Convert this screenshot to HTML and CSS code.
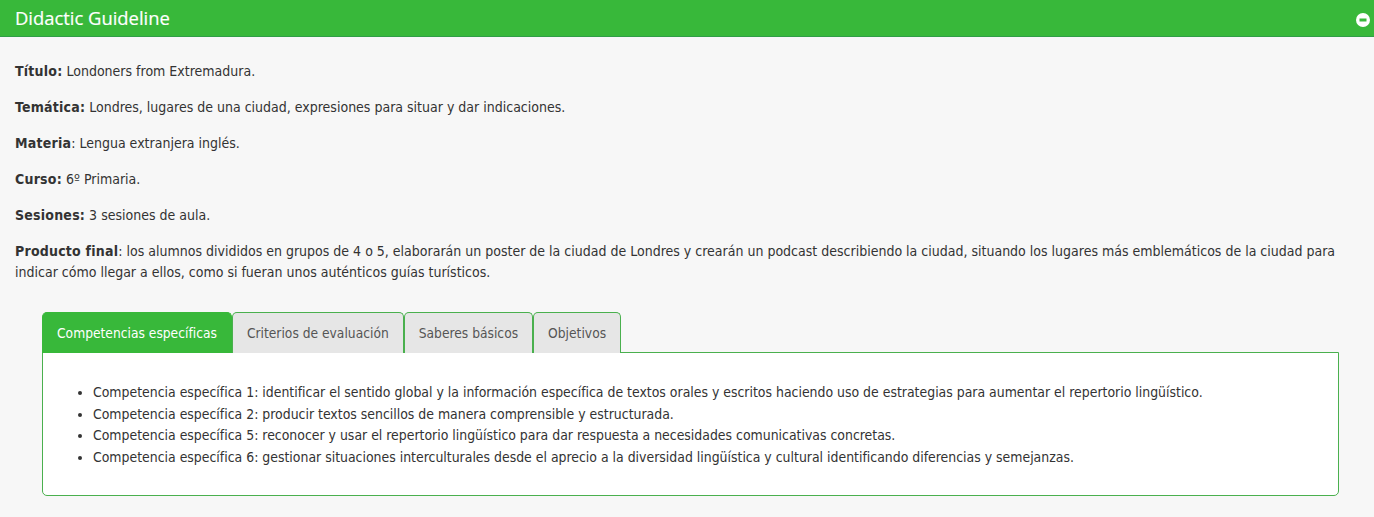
FILE: index.html
```html
<!DOCTYPE html>
<html lang="es">
<head>
<meta charset="utf-8">
<title>Didactic Guideline</title>
<link rel="stylesheet" href="styles.css">
</head>
<body>
<header class="bar">
  <h1 class="bar-title">Didactic Guideline</h1>
  <svg class="bar-icon" width="14" height="14" viewBox="0 0 14 14" aria-hidden="true"><circle cx="7" cy="7" r="7" fill="#fff"/><rect x="3.5" y="5.5" width="7" height="3" fill="#38b83a"/></svg>
</header>
<main class="content">
  <p class="line"><b>Título:</b> Londoners from Extremadura.</p>
  <p class="line"><b>Temática:</b> Londres, lugares de una ciudad, expresiones para situar y dar indicaciones.</p>
  <p class="line"><b>Materia</b>: Lengua extranjera inglés.</p>
  <p class="line"><b>Curso:</b> 6º Primaria.</p>
  <p class="line"><b>Sesiones:</b> 3 sesiones de aula.</p>
  <p class="line"><b>Producto final</b>: los alumnos divididos en grupos de 4 o 5, elaborarán un poster de la ciudad de Londres y crearán un podcast describiendo la ciudad, situando los lugares más emblemáticos de la ciudad para indicar cómo llegar a ellos, como si fueran unos auténticos guías turísticos.</p>
  <section class="tabs">
    <nav class="tab-row">
      <a class="tab tab-active">Competencias específicas</a>
      <a class="tab">Criterios de evaluación</a>
      <a class="tab">Saberes básicos</a>
      <a class="tab">Objetivos</a>
    </nav>
    <div class="panel">
      <ul class="list">
        <li>Competencia específica 1: identificar el sentido global y la información específica de textos orales y escritos haciendo uso de estrategias para aumentar el repertorio lingüístico.</li>
        <li>Competencia específica 2: producir textos sencillos de manera comprensible y estructurada.</li>
        <li>Competencia específica 5: reconocer y usar el repertorio lingüístico para dar respuesta a necesidades comunicativas concretas.</li>
        <li>Competencia específica 6: gestionar situaciones interculturales desde el aprecio a la diversidad lingüística y cultural identificando diferencias y semejanzas.</li>
      </ul>
    </div>
  </section>
</main>
</body>
</html>
```
FILE: styles.css
```css
* { box-sizing: border-box; }
html, body { margin: 0; height: 100%; }
body {
  background: #f7f7f7;
  color: #333;
  font-family: "DejaVu Sans", "Open Sans", sans-serif;
  font-stretch: condensed;
  font-size: 14px;
  line-height: 21px;
  overflow: hidden;
}
.bar {
  height: 37px;
  background: #38b83a;
  border-bottom: 1px solid #2f9e47;
  display: flex;
  align-items: center;
  justify-content: space-between;
  padding: 0 4px 0 15px;
}
.bar-title {
  margin: -2px 0 0;
  color: #fff;
  font-family: "Open Sans", sans-serif;
  font-stretch: normal;
  font-size: 18.4px;
  font-weight: 400;
  -webkit-text-stroke: 0.2px #fff;
}
.bar-icon { margin-top: 3px; }
.content { padding: 24px 35px 0 15px; }
.line { margin: 0 0 15px; }
.line b { font-weight: 700; letter-spacing: 0.22px; }
.tabs { margin: 29px 0 0 27px; }
.tab-row { display: flex; height: 41px; position: relative; margin-bottom: -1px; font-size: 13.7px; }
.tab {
  height: 41px;
  padding: 10px 14px;
  background: #e6e6e6;
  color: #555;
  border: 1px solid #4ab04e;
  border-bottom: 0;
  border-radius: 5px 5px 0 0;
}
.tab-active { background: #38b83a; border-color: #38b83a; color: #fff; }
.panel {
  background: #fff;
  border: 1px solid #4ab04e;
  border-radius: 0 0 5px 5px;
  height: 144px;
  padding: 29px 14px 0;
}
.list { margin: 0; padding: 0 0 0 36px; font-size: 13.9px; }
.list li { line-height: 21.6px; }
```
